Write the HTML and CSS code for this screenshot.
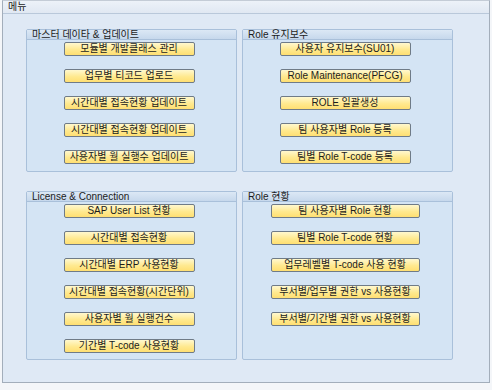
FILE: index.html
```html
<!DOCTYPE html>
<html>

<head>
  <title>메뉴</title>
  <link rel="stylesheet" href="styles.css">
</head>
<body>
<div class="frame">
  <div class="frame-title">메뉴</div>
  <div class="frame-body">
    <div class="group">
      <div class="group-title">마스터 데이타 &amp; 업데이트</div>
      <div class="group-body">
        <button class="btn">모듈별 개발클래스 관리</button>
        <button class="btn">업무별 티코드 업로드</button>
        <button class="btn">시간대별 접속현황 업데이트</button>
        <button class="btn">시간대별 접속현황 업데이트</button>
        <button class="btn">사용자별 월 실행수 업데이트</button>
      </div>
    </div>
    <div class="group">
      <div class="group-title">Role 유지보수</div>
      <div class="group-body">
        <button class="btn">사용자 유지보수(SU01)</button>
        <button class="btn">Role Maintenance(PFCG)</button>
        <button class="btn">ROLE 일괄생성</button>
        <button class="btn">팀 사용자별 Role 등록</button>
        <button class="btn">팀별 Role T-code 등록</button>
      </div>
    </div>
    <div class="group">
      <div class="group-title">License &amp; Connection</div>
      <div class="group-body">
        <button class="btn">SAP User List 현황</button>
        <button class="btn">시간대별 접속현황</button>
        <button class="btn">시간대별 ERP 사용현황</button>
        <button class="btn">시간대별 접속현황(시간단위)</button>
        <button class="btn">사용자별 월 실행건수</button>
        <button class="btn">기간별 T-code 사용현황</button>
      </div>
    </div>
    <div class="group">
      <div class="group-title">Role 현황</div>
      <div class="group-body">
        <button class="btn wide">팀 사용자별 Role 현황</button>
        <button class="btn wide">팀별 Role T-code 현황</button>
        <button class="btn wide">업무레벨별 T-code 사용 현황</button>
        <button class="btn wide">부서별/업무별 권한 vs 사용현황</button>
        <button class="btn wide">부서별/기간별 권한 vs 사용현황</button>
      </div>
    </div>
  </div>
</div>
</body>

</html>
```

FILE: styles.css
```css
body {
    margin: 0;
    background-color: #f4f6f9;
    font-family: "Liberation Sans", "Noto Sans CJK KR", sans-serif;
    font-size: 10px;
    color: #1c1c1c;
  }
  .frame {
    margin: 0 2px 0 2px;
    height: 383px;
    border: 1px solid #a3aebb;
    border-top-color: #c4ccd6;
    background-color: #dfe9f5;
    box-sizing: border-box;
  }
  .frame-title {
    height: 12px;
    line-height: 12px;
    padding-left: 5px;
    background: linear-gradient(to bottom, #edf2f8, #e0e8f2);
    border-bottom: 1px solid #b9c8da;
  }
  .frame-body {
    display: grid;
    grid-template-columns: 211px 211px;
    grid-template-rows: 143px 169px;
    column-gap: 5px;
    row-gap: 19px;
    padding: 15px 0 0 23px;
  }
  .group {
    border: 1px solid #a9c0da;
    border-radius: 2px;
    background-color: #d4e4f4;
    display: flex;
    flex-direction: column;
  }
  .group-title {
    height: 9px;
    line-height: 9px;
    padding-left: 5px;
    background: linear-gradient(to bottom, #dce8f5, #c6d8ec);
    border-bottom: 1px solid #a9c0da;
    overflow: visible;
    white-space: nowrap;
  }
  .group-body {
    display: flex;
    flex-direction: column;
    align-items: center;
    gap: 13px;
    padding: 2px 5px 0 0;
  }
  .btn {
    width: 131px;
    height: 14px;
    padding: 0;
    border: 1px solid #6f7b87;
    border-radius: 2px;
    background: linear-gradient(to bottom, #fff8cf, #ffe98f 55%, #ffdf72);
    font-family: inherit;
    font-size: 10px;
    line-height: 12px;
    color: #1c1c1c;
    white-space: nowrap;
  }
  .btn.wide {
    width: 149px;
  }
```
